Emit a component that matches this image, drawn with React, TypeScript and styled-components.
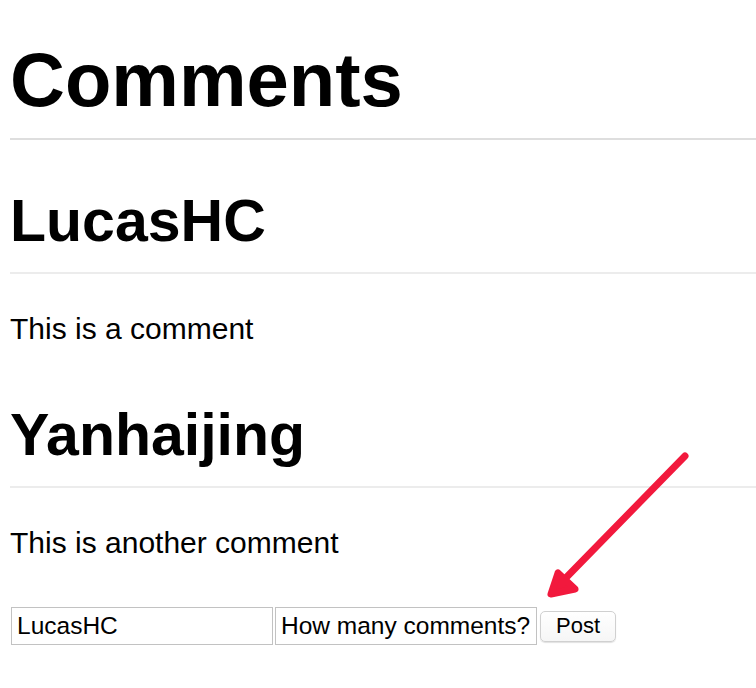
import * as React from 'react';
import styled, { createGlobalStyle } from 'styled-components';

interface Comment {
  author: string;
  text: string;
}

const comments: Comment[] = [
  { author: 'LucasHC', text: 'This is a comment' },
  { author: 'Yanhaijing', text: 'This is another comment' },
];

const GlobalStyle = createGlobalStyle`
  html, body {
    margin: 0;
    padding: 0;
    background: #fff;
  }
  body {
    font-family: "Liberation Sans", Arial, Helvetica, sans-serif;
    color: #000;
  }
`;

const Page = styled.div`
  position: relative;
  width: 756px;
  height: 688px;
  box-sizing: border-box;
  padding: 37px 0 0 10px;
  overflow: hidden;
`;

const Title = styled.h1`
  margin: 0;
  font-size: 76px;
  line-height: 86px;
  font-weight: bold;
  padding-bottom: 15px;
  border-bottom: 2px solid #dedede;
`;

const CommentList = styled.div`
  display: flex;
  flex-direction: column;
`;

const CommentItem = styled.div`
  margin-top: 48px;

  & + & {
    margin-top: 55px;
  }
`;

const Author = styled.h2`
  margin: 0;
  font-size: 59px;
  line-height: 67px;
  font-weight: bold;
  padding-bottom: 17px;
  border-bottom: 2px solid #ececec;
`;

const Body = styled.p`
  margin: 37px 0 0;
  font-size: 30px;
  line-height: 36px;
`;

const Form = styled.form`
  display: flex;
  align-items: center;
  gap: 2px;
  margin-top: 46px;
  margin-left: 1px;
`;

const Field = styled.input`
  box-sizing: border-box;
  width: 262px;
  height: 38px;
  padding: 0 5px;
  border: 1px solid #c2c2c2;
  border-radius: 0;
  font-family: "Liberation Sans", Arial, Helvetica, sans-serif;
  font-size: 24.5px;
  color: #000;
  background: #fff;
  outline: none;
`;

const PostButton = styled.button`
  box-sizing: border-box;
  height: 31px;
  margin-left: 1px;
  padding: 0 15px;
  border: 1px solid #d0d0d0;
  border-radius: 5px;
  background: linear-gradient(#fff, #f6f6f6);
  box-shadow: 0 1px 1px rgba(0, 0, 0, 0.12);
  font-family: "Liberation Sans", Arial, Helvetica, sans-serif;
  font-size: 22px;
  color: #000;
`;

const Arrow = styled.svg`
  position: absolute;
  left: 0;
  top: 0;
  pointer-events: none;
`;

export default function App() {
  const [author, setAuthor] = React.useState('LucasHC');
  const [text, setText] = React.useState('How many comments?');

  return (
    <Page>
      <GlobalStyle />
      <Title>Comments</Title>
      <CommentList>
        {comments.map(c => (
          <CommentItem key={c.author}>
            <Author>{c.author}</Author>
            <Body>{c.text}</Body>
          </CommentItem>
        ))}
      </CommentList>
      <Form onSubmit={e => e.preventDefault()}>
        <Field value={author} onChange={e => setAuthor(e.target.value)} />
        <Field value={text} onChange={e => setText(e.target.value)} />
        <PostButton type="submit">Post</PostButton>
      </Form>
      {/* annotation arrow pointing at the form */}
      <Arrow width="756" height="688" viewBox="0 0 756 688">
        <g
          stroke="#f2193d"
          strokeWidth="7"
          strokeLinecap="round"
          strokeLinejoin="round"
          fill="#f2193d"
        >
          <line x1="685" y1="456" x2="554" y2="590" />
          <path d="M558 573 L551 594 L575 589 Z" />
        </g>
      </Arrow>
    </Page>
  );
}
